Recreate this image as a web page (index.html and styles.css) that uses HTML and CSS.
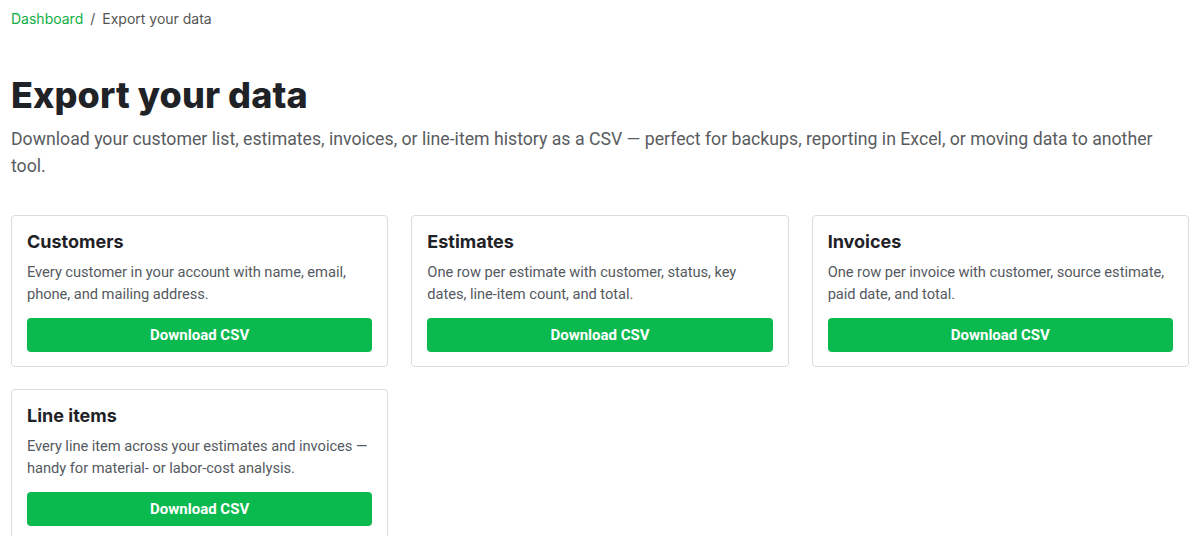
FILE: index.html
```html
<!DOCTYPE html>
<html lang="en">
<head>
<meta charset="utf-8">
<title>Export your data</title>
<link rel="stylesheet" href="styles.css">
</head>
<body>
<main class="page">
  <nav class="crumbs">
    <a class="crumb-link" href="#">Dashboard</a>
    <span class="crumb-sep">/</span>
    <span class="crumb-current">Export your data</span>
  </nav>
  <header class="intro">
    <h1 class="title">Export your data</h1>
    <p class="lead">Download your customer list, estimates, invoices, or line-item history as a CSV — perfect for backups, reporting in Excel, or moving data to another tool.</p>
  </header>
  <section class="grid">
    <article class="card">
      <h2 class="card-title">Customers</h2>
      <p class="card-text">Every customer in your account with name, email, phone, and mailing address.</p>
      <a class="btn" href="#">Download CSV</a>
    </article>
    <article class="card">
      <h2 class="card-title">Estimates</h2>
      <p class="card-text">One row per estimate with customer, status, key dates, line-item count, and total.</p>
      <a class="btn" href="#">Download CSV</a>
    </article>
    <article class="card">
      <h2 class="card-title">Invoices</h2>
      <p class="card-text">One row per invoice with customer, source estimate, paid date, and total.</p>
      <a class="btn" href="#">Download CSV</a>
    </article>
    <article class="card">
      <h2 class="card-title">Line items</h2>
      <p class="card-text">Every line item across your estimates and invoices — handy for material- or labor-cost analysis.</p>
      <a class="btn" href="#">Download CSV</a>
    </article>
  </section>
</main>
</body>
</html>
```

FILE: styles.css
```css
* { box-sizing: border-box; }
html, body { margin: 0; padding: 0; background: #fff; }
body {
  font-family: Roboto, "Liberation Sans", sans-serif;
  color: #1f2328;
}
.page {
  padding: 9px 11px 0 11px;
}
.crumbs {
  display: flex;
  align-items: center;
  gap: 7px;
  font-family: Inter, "Noto Sans", sans-serif;
  font-size: 14px;
  line-height: 20px;
}
.crumb-link { color: #0fae45; text-decoration: none; }
.crumb-sep { color: #555; }
.crumb-current { color: #555; }
.intro { margin-top: 44px; }
.title {
  margin: 0;
  font-family: Inter, "Noto Sans", sans-serif;
  font-size: 36px;
  line-height: 44px;
  font-weight: 800;
  color: #1f2226;
  letter-spacing: 0.1px;
}
.lead {
  margin: 9px 0 0 0;
  font-size: 17.7px;
  line-height: 27px;
  color: #595c60;
}
.grid {
  margin-top: 35px;
  display: grid;
  grid-template-columns: repeat(3, 1fr);
  column-gap: 23px;
  row-gap: 22px;
}
.card {
  border: 1px solid #dcdcdc;
  border-radius: 4px;
  padding: 14px 15px 14px 15px;
  display: flex;
  flex-direction: column;
}
.card-title {
  margin: 0;
  font-family: Inter, "Noto Sans", sans-serif;
  font-size: 18px;
  line-height: 24px;
  font-weight: 700;
  color: #1f2226;
}
.card-text {
  margin: 7px 0 0 0;
  font-size: 14.7px;
  line-height: 22px;
  letter-spacing: -0.05px;
  color: #555a5f;
}
.btn {
  margin-top: 13px;
  display: flex;
  align-items: center;
  justify-content: center;
  height: 34px;
  border-radius: 4px;
  background: #0bba4f;
  color: #fff;
  font-size: 15px;
  font-weight: 700;
  text-decoration: none;
}
```
